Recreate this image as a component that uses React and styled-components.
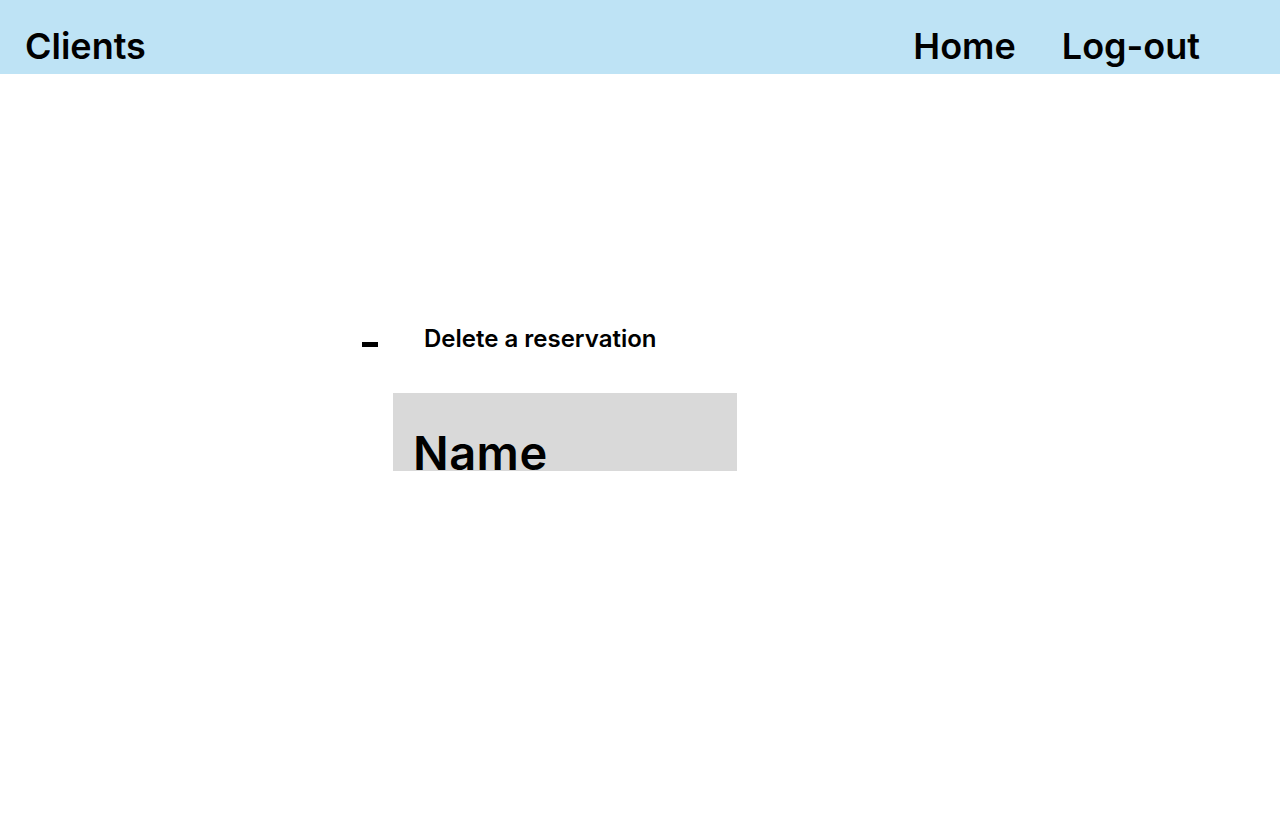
import React from 'react'
import styled, { createGlobalStyle } from 'styled-components'

const GlobalStyle = createGlobalStyle`
  body {
    margin: 0;
    background: #ffffff;
    font-family: Inter, "Noto Sans", sans-serif;
    color: #000000;
  }
`

function App() {
  return (
    <>
      <GlobalStyle />
      <Header>
        <Brand>Clients</Brand>
        <Nav>
          <NavLink>Home</NavLink>
          <NavLink>Log-out</NavLink>
        </Nav>
      </Header>
      <Main>
        <TitleRow>
          <Dash />
          <Title>Delete a reservation</Title>
        </TitleRow>
        <Field>
          <FieldLabel>Name</FieldLabel>
        </Field>
      </Main>
    </>
  )
}

export default App

const Header = styled.header`
  height: 74px;
  background: #bee3f5;
  display: flex;
  justify-content: space-between;
  align-items: flex-start;
  padding: 24px 80px 0 25px;
  box-sizing: border-box;
`
const Brand = styled.div`
  font-size: 36px;
  line-height: 44px;
  font-weight: 600;
`
const Nav = styled.nav`
  display: flex;
  gap: 46px;
`
const NavLink = styled(Brand)`
  cursor: pointer;
`
const Main = styled.main`
  padding: 250px 0 0 362px;
`
const TitleRow = styled.div`
  display: flex;
  align-items: flex-start;
`
const Dash = styled.div`
  width: 16px;
  height: 5px;
  background: #000;
  margin-top: 18px;
  margin-right: 46px;
`
const Title = styled.h2`
  margin: 0;
  font-size: 24px;
  line-height: 29px;
  font-weight: 600;
`
const Field = styled.div`
  width: 344px;
  height: 78px;
  margin: 40px 0 0 31px;
  background: #d9d9d9;
  padding: 31px 0 0 20px;
  box-sizing: border-box;
`
const FieldLabel = styled.div`
  font-size: 47px;
  line-height: 57px;
  font-weight: 600;
  letter-spacing: 0.01em;
`
